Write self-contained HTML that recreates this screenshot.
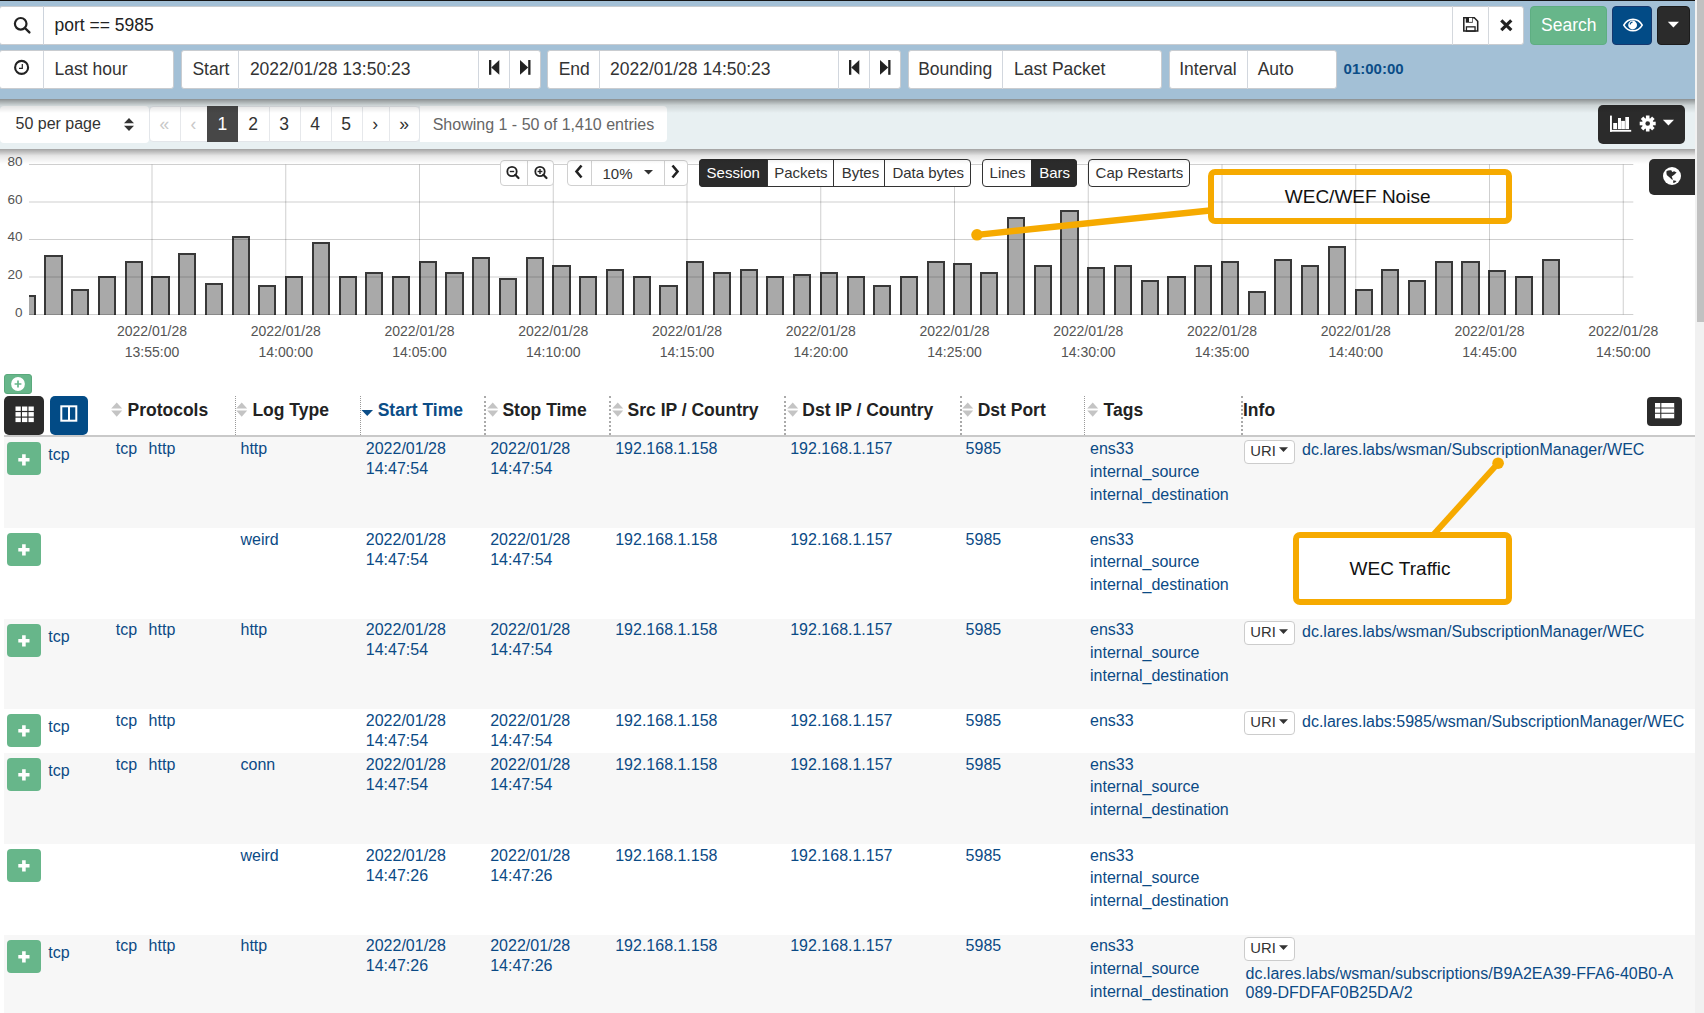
<!DOCTYPE html><html><head><meta charset="utf-8"><style>
html,body{margin:0;padding:0;width:1704px;height:1013px;overflow:hidden;background:#fff;}
body{position:relative;font-family:"Liberation Sans", sans-serif;}
.t{position:absolute;white-space:nowrap;line-height:1;}
.b{position:absolute;box-sizing:border-box;}
svg{position:absolute;overflow:visible;}
</style></head><body>
<div class="b" style="left:0.00px;top:0.00px;width:1695.00px;height:1.00px;background:#151515;"></div>
<div class="b" style="left:0.00px;top:1.00px;width:1695.00px;height:98.00px;background:#a3c0d6;"></div>
<div class="b" style="left:-0.60px;top:6.00px;width:1524.60px;height:38.50px;background:#fff;border:1px solid #c9ccd0;border-radius:3px;"></div>
<div class="b" style="left:43.00px;top:6.00px;width:1.00px;height:38.50px;background:#ccd3dc;"></div>
<div class="b" style="left:1452.00px;top:6.00px;width:1.00px;height:38.50px;background:#d4d8dd;"></div>
<div class="b" style="left:1488.00px;top:6.00px;width:1.00px;height:38.50px;background:#d4d8dd;"></div>
<div class="t" style="left:54.50px;top:17.00px;font-size:17.5px;color:#222;font-weight:normal;">port == 5985</div>
<svg style="left:0;top:0" width="50" height="50"><circle cx="20.7" cy="23.8" r="5.8" fill="none" stroke="#222" stroke-width="2.2"/><line x1="24.9" y1="28" x2="29.4" y2="32.4" stroke="#222" stroke-width="2.4" stroke-linecap="round"/></svg>
<svg style="left:1463.3px;top:16.9px" width="18" height="18"><path d="M0.8 0.8H11.3L14.7 4.2V14H0.8Z" fill="none" stroke="#222" stroke-width="1.55"/><rect x="2.8" y="0.4" width="7" height="5.3" fill="#222"/><rect x="6" y="0.9" width="3.2" height="4" fill="#fff"/><rect x="3.45" y="9.85" width="8.6" height="4.3" fill="none" stroke="#222" stroke-width="1.3"/></svg>
<svg style="left:1500.3px;top:19px" width="14" height="14"><path d="M1.3 1.3L11.3 11.1M11.3 1.3L1.3 11.1" stroke="#222" stroke-width="3.2"/></svg>
<div class="b" style="left:1530.00px;top:6.00px;width:77.00px;height:39.00px;background:#67b68a;border:1px solid #5eae82;border-radius:4px;"></div>
<div class="t" style="left:1541.00px;top:17.00px;font-size:17.5px;color:#fff;font-weight:normal;">Search</div>
<div class="b" style="left:1612.00px;top:6.00px;width:40.00px;height:39.00px;background:#024b86;border:1px solid #17386e;border-radius:4px;"></div>
<svg style="left:1612;top:6" width="40" height="39"><path d="M11.8 19.1C14 15.2 17 13.4 21 13.4S28 15.2 30.2 19.1C28 23 25 24.8 21 24.8S14 23 11.8 19.1z" fill="none" stroke="#fff" stroke-width="1.6"/><circle cx="20.6" cy="19" r="4.4" fill="#fff"/><path d="M18.2 18.6a2.6 2.6 0 0 1 2.3-2.5" fill="none" stroke="#024b86" stroke-width="1.1"/></svg>
<div class="b" style="left:1657.00px;top:6.00px;width:33.00px;height:39.00px;background:#2b2b2b;border:1px solid #1c1c1c;border-radius:4px;"></div>
<svg style="left:1657;top:6" width="33" height="39"><path d="M10.8 15.8h11.2l-5.6 5.6z" fill="#fff"/></svg>
<div class="b" style="left:-0.60px;top:50.20px;width:174.60px;height:38.70px;background:#fff;border:1px solid #c9ccd0;border-radius:3px;"></div>
<div class="b" style="left:43.00px;top:50.50px;width:1.00px;height:38.10px;background:#d2d7de;"></div>
<div class="b" style="left:181.00px;top:50.20px;width:359.80px;height:38.70px;background:#fff;border:1px solid #c9ccd0;border-radius:3px;"></div>
<div class="b" style="left:238.00px;top:50.50px;width:1.00px;height:38.10px;background:#d2d7de;"></div>
<div class="b" style="left:478.00px;top:50.50px;width:1.00px;height:38.10px;background:#d2d7de;"></div>
<div class="b" style="left:509.00px;top:50.50px;width:1.00px;height:38.10px;background:#d2d7de;"></div>
<div class="b" style="left:546.50px;top:50.20px;width:354.50px;height:38.70px;background:#fff;border:1px solid #c9ccd0;border-radius:3px;"></div>
<div class="b" style="left:599.00px;top:50.50px;width:1.00px;height:38.10px;background:#d2d7de;"></div>
<div class="b" style="left:838.00px;top:50.50px;width:1.00px;height:38.10px;background:#d2d7de;"></div>
<div class="b" style="left:869.00px;top:50.50px;width:1.00px;height:38.10px;background:#d2d7de;"></div>
<div class="b" style="left:908.00px;top:50.20px;width:253.50px;height:38.70px;background:#fff;border:1px solid #c9ccd0;border-radius:3px;"></div>
<div class="b" style="left:1002.00px;top:50.50px;width:1.00px;height:38.10px;background:#d2d7de;"></div>
<div class="b" style="left:1169.30px;top:50.20px;width:167.70px;height:38.70px;background:#fff;border:1px solid #c9ccd0;border-radius:3px;"></div>
<div class="b" style="left:1246.50px;top:50.50px;width:1.00px;height:38.10px;background:#d2d7de;"></div>
<svg style="left:0;top:50px" width="44" height="38"><circle cx="21.6" cy="17.4" r="6.5" fill="none" stroke="#222" stroke-width="2.1"/><path d="M22.3 14.1v4.3h-3.3" fill="none" stroke="#222" stroke-width="1.2"/></svg>
<div class="t" style="left:54.50px;top:61.00px;font-size:17.5px;color:#333;font-weight:normal;">Last hour</div>
<div class="t" style="left:192.40px;top:61.00px;font-size:17.5px;color:#333;font-weight:normal;">Start</div>
<div class="t" style="left:249.90px;top:61.00px;font-size:17.5px;color:#333;font-weight:normal;">2022/01/28 13:50:23</div>
<div class="t" style="left:558.70px;top:61.00px;font-size:17.5px;color:#333;font-weight:normal;">End</div>
<div class="t" style="left:610.00px;top:61.00px;font-size:17.5px;color:#333;font-weight:normal;">2022/01/28 14:50:23</div>
<div class="t" style="left:918.20px;top:61.00px;font-size:17.5px;color:#333;font-weight:normal;">Bounding</div>
<div class="t" style="left:1014.00px;top:61.00px;font-size:17.5px;color:#333;font-weight:normal;">Last Packet</div>
<div class="t" style="left:1179.20px;top:61.00px;font-size:17.5px;color:#333;font-weight:normal;">Interval</div>
<div class="t" style="left:1257.70px;top:61.00px;font-size:17.5px;color:#333;font-weight:normal;">Auto</div>
<div class="t" style="left:1343.60px;top:61.00px;font-size:15px;color:#0b4d87;font-weight:bold;">01:00:00</div>
<svg style="left:489px;top:60.1px" width="12" height="16"><rect x="0" y="0" width="2.3" height="14.8" fill="#222"/><path d="M10.3 0v14.8L2.3 7.4z" fill="#222"/></svg>
<svg style="left:520.2px;top:60.1px" width="12" height="16"><rect x="8.2" y="0" width="2.3" height="14.8" fill="#222"/><path d="M0 0v14.8l8.2-7.4z" fill="#222"/></svg>
<svg style="left:849px;top:60.1px" width="12" height="16"><rect x="0" y="0" width="2.3" height="14.8" fill="#222"/><path d="M10.3 0v14.8L2.3 7.4z" fill="#222"/></svg>
<svg style="left:880.2px;top:60.1px" width="12" height="16"><rect x="8.2" y="0" width="2.3" height="14.8" fill="#222"/><path d="M0 0v14.8l8.2-7.4z" fill="#222"/></svg>
<div class="b" style="left:0.00px;top:99.00px;width:1695.00px;height:49.60px;background:#e8f0f2;"></div>
<div class="b" style="left:0.00px;top:106.00px;width:148.50px;height:36.60px;background:#fff;border-radius:4px;"></div>
<div class="t" style="left:15.50px;top:116.00px;font-size:16px;color:#333;font-weight:normal;">50 per page</div>
<svg style="left:123px;top:117px" width="12" height="16"><path d="M1 6.3L6 1l5 5.3z M1 8.7L6 14l5-5.3z" fill="#333"/></svg>
<div class="b" style="left:149.00px;top:106.00px;width:270.70px;height:36.00px;background:#fff;border:1px solid #e3e6ea;border-radius:4px;"></div>
<div class="b" style="left:179.50px;top:106.00px;width:1.00px;height:36.00px;background:#e6e8eb;"></div>
<div class="t" style="left:149.0px;top:116px;width:30.5px;text-align:center;font-size:17.5px;color:#c8c8c8">«</div>
<div class="b" style="left:207.20px;top:106.00px;width:1.00px;height:36.00px;background:#e6e8eb;"></div>
<div class="t" style="left:179.5px;top:116px;width:27.7px;text-align:center;font-size:17.5px;color:#c8c8c8">‹</div>
<div class="b" style="left:207.20px;top:106.00px;width:30.50px;height:36.00px;background:#474747;"></div>
<div class="t" style="left:207.2px;top:116px;width:30.5px;text-align:center;font-size:17.5px;color:#fff">1</div>
<div class="b" style="left:268.70px;top:106.00px;width:1.00px;height:36.00px;background:#e6e8eb;"></div>
<div class="t" style="left:237.7px;top:116px;width:31.0px;text-align:center;font-size:17.5px;color:#333">2</div>
<div class="b" style="left:299.70px;top:106.00px;width:1.00px;height:36.00px;background:#e6e8eb;"></div>
<div class="t" style="left:268.7px;top:116px;width:31.0px;text-align:center;font-size:17.5px;color:#333">3</div>
<div class="b" style="left:330.70px;top:106.00px;width:1.00px;height:36.00px;background:#e6e8eb;"></div>
<div class="t" style="left:299.7px;top:116px;width:31.0px;text-align:center;font-size:17.5px;color:#333">4</div>
<div class="b" style="left:361.70px;top:106.00px;width:1.00px;height:36.00px;background:#e6e8eb;"></div>
<div class="t" style="left:330.7px;top:116px;width:31.0px;text-align:center;font-size:17.5px;color:#333">5</div>
<div class="b" style="left:388.50px;top:106.00px;width:1.00px;height:36.00px;background:#e6e8eb;"></div>
<div class="t" style="left:361.7px;top:116px;width:26.8px;text-align:center;font-size:17.5px;color:#333">›</div>
<div class="b" style="left:419.70px;top:106.00px;width:1.00px;height:36.00px;background:#e6e8eb;"></div>
<div class="t" style="left:388.5px;top:116px;width:31.2px;text-align:center;font-size:17.5px;color:#333">»</div>
<div class="b" style="left:420.40px;top:106.00px;width:246.60px;height:36.00px;background:#fff;border-radius:0 4px 4px 0;"></div>
<div class="t" style="left:432.70px;top:117.00px;font-size:16px;color:#666;font-weight:normal;">Showing 1 - 50 of 1,410 entries</div>
<div class="b" style="left:1598.00px;top:105.00px;width:87.00px;height:38.50px;background:#2b2b2b;border-radius:5px;"></div>
<svg style="left:1610px;top:115px" width="24" height="18"><rect x="0" y="0.6" width="1.9" height="16.1" fill="#fff"/><rect x="0" y="14.9" width="21.2" height="1.8" fill="#fff"/><rect x="3.2" y="8" width="3.9" height="6.1" fill="#fff"/><rect x="8" y="3" width="3" height="11.1" fill="#fff"/><rect x="11.2" y="5.9" width="3.7" height="8.2" fill="#fff"/><rect x="15.3" y="2" width="3.7" height="12.1" fill="#fff"/></svg>
<svg style="left:1638px;top:114px" width="20" height="20"><g transform="translate(9.7,9.5)"><circle r="5.6" fill="#fff"/><rect x="-1.8" y="-8" width="3.6" height="4" fill="#fff" transform="rotate(0)"/><rect x="-1.8" y="-8" width="3.6" height="4" fill="#fff" transform="rotate(45)"/><rect x="-1.8" y="-8" width="3.6" height="4" fill="#fff" transform="rotate(90)"/><rect x="-1.8" y="-8" width="3.6" height="4" fill="#fff" transform="rotate(135)"/><rect x="-1.8" y="-8" width="3.6" height="4" fill="#fff" transform="rotate(180)"/><rect x="-1.8" y="-8" width="3.6" height="4" fill="#fff" transform="rotate(225)"/><rect x="-1.8" y="-8" width="3.6" height="4" fill="#fff" transform="rotate(270)"/><rect x="-1.8" y="-8" width="3.6" height="4" fill="#fff" transform="rotate(315)"/><circle r="2.3" fill="#2b2b2b"/></g></svg>
<svg style="left:1662px;top:118px" width="14" height="10"><path d="M0.9 1.8h11.1l-5.55 5.6z" fill="#fff"/></svg>
<div class="b" style="left:0.00px;top:99.00px;width:1695.00px;height:14.00px;background:linear-gradient(rgba(0,0,0,.40),rgba(0,0,0,.12) 45%,rgba(0,0,0,0));"></div>
<div class="t" style="left:112.00px;top:324.00px;font-size:14px;color:#545454;font-weight:normal;width:80px;text-align:center;">2022/01/28</div>
<div class="t" style="left:112.00px;top:345.00px;font-size:14px;color:#545454;font-weight:normal;width:80px;text-align:center;">13:55:00</div>
<div class="t" style="left:245.75px;top:324.00px;font-size:14px;color:#545454;font-weight:normal;width:80px;text-align:center;">2022/01/28</div>
<div class="t" style="left:245.75px;top:345.00px;font-size:14px;color:#545454;font-weight:normal;width:80px;text-align:center;">14:00:00</div>
<div class="t" style="left:379.50px;top:324.00px;font-size:14px;color:#545454;font-weight:normal;width:80px;text-align:center;">2022/01/28</div>
<div class="t" style="left:379.50px;top:345.00px;font-size:14px;color:#545454;font-weight:normal;width:80px;text-align:center;">14:05:00</div>
<div class="t" style="left:513.25px;top:324.00px;font-size:14px;color:#545454;font-weight:normal;width:80px;text-align:center;">2022/01/28</div>
<div class="t" style="left:513.25px;top:345.00px;font-size:14px;color:#545454;font-weight:normal;width:80px;text-align:center;">14:10:00</div>
<div class="t" style="left:647.00px;top:324.00px;font-size:14px;color:#545454;font-weight:normal;width:80px;text-align:center;">2022/01/28</div>
<div class="t" style="left:647.00px;top:345.00px;font-size:14px;color:#545454;font-weight:normal;width:80px;text-align:center;">14:15:00</div>
<div class="t" style="left:780.75px;top:324.00px;font-size:14px;color:#545454;font-weight:normal;width:80px;text-align:center;">2022/01/28</div>
<div class="t" style="left:780.75px;top:345.00px;font-size:14px;color:#545454;font-weight:normal;width:80px;text-align:center;">14:20:00</div>
<div class="t" style="left:914.50px;top:324.00px;font-size:14px;color:#545454;font-weight:normal;width:80px;text-align:center;">2022/01/28</div>
<div class="t" style="left:914.50px;top:345.00px;font-size:14px;color:#545454;font-weight:normal;width:80px;text-align:center;">14:25:00</div>
<div class="t" style="left:1048.25px;top:324.00px;font-size:14px;color:#545454;font-weight:normal;width:80px;text-align:center;">2022/01/28</div>
<div class="t" style="left:1048.25px;top:345.00px;font-size:14px;color:#545454;font-weight:normal;width:80px;text-align:center;">14:30:00</div>
<div class="t" style="left:1182.00px;top:324.00px;font-size:14px;color:#545454;font-weight:normal;width:80px;text-align:center;">2022/01/28</div>
<div class="t" style="left:1182.00px;top:345.00px;font-size:14px;color:#545454;font-weight:normal;width:80px;text-align:center;">14:35:00</div>
<div class="t" style="left:1315.75px;top:324.00px;font-size:14px;color:#545454;font-weight:normal;width:80px;text-align:center;">2022/01/28</div>
<div class="t" style="left:1315.75px;top:345.00px;font-size:14px;color:#545454;font-weight:normal;width:80px;text-align:center;">14:40:00</div>
<div class="t" style="left:1449.50px;top:324.00px;font-size:14px;color:#545454;font-weight:normal;width:80px;text-align:center;">2022/01/28</div>
<div class="t" style="left:1449.50px;top:345.00px;font-size:14px;color:#545454;font-weight:normal;width:80px;text-align:center;">14:45:00</div>
<div class="t" style="left:1583.25px;top:324.00px;font-size:14px;color:#545454;font-weight:normal;width:80px;text-align:center;">2022/01/28</div>
<div class="t" style="left:1583.25px;top:345.00px;font-size:14px;color:#545454;font-weight:normal;width:80px;text-align:center;">14:50:00</div>
<div class="t" style="left:0.00px;top:155.00px;font-size:13.5px;color:#545454;font-weight:normal;width:22.5px;text-align:right;">80</div>
<div class="t" style="left:0.00px;top:193.00px;font-size:13.5px;color:#545454;font-weight:normal;width:22.5px;text-align:right;">60</div>
<div class="t" style="left:0.00px;top:230.00px;font-size:13.5px;color:#545454;font-weight:normal;width:22.5px;text-align:right;">40</div>
<div class="t" style="left:0.00px;top:268.00px;font-size:13.5px;color:#545454;font-weight:normal;width:22.5px;text-align:right;">20</div>
<div class="t" style="left:0.00px;top:306.00px;font-size:13.5px;color:#545454;font-weight:normal;width:22.5px;text-align:right;">0</div>
<div class="b" style="left:29.00px;top:295.10px;width:6.86px;height:19.90px;background:#a9a9a9;border-top:2.6px solid #383838;border-right:2.6px solid #383838;"></div>
<div class="b" style="left:44.40px;top:255.20px;width:18.20px;height:59.80px;background:#a9a9a9;border-top:2.6px solid #383838;border-right:2.6px solid #383838;border-left:2.6px solid #383838;"></div>
<div class="b" style="left:71.14px;top:288.70px;width:18.20px;height:26.30px;background:#a9a9a9;border-top:2.6px solid #383838;border-right:2.6px solid #383838;border-left:2.6px solid #383838;"></div>
<div class="b" style="left:97.87px;top:275.60px;width:18.20px;height:39.40px;background:#a9a9a9;border-top:2.6px solid #383838;border-right:2.6px solid #383838;border-left:2.6px solid #383838;"></div>
<div class="b" style="left:124.61px;top:261.00px;width:18.20px;height:54.00px;background:#a9a9a9;border-top:2.6px solid #383838;border-right:2.6px solid #383838;border-left:2.6px solid #383838;"></div>
<div class="b" style="left:151.35px;top:275.60px;width:18.20px;height:39.40px;background:#a9a9a9;border-top:2.6px solid #383838;border-right:2.6px solid #383838;border-left:2.6px solid #383838;"></div>
<div class="b" style="left:178.09px;top:253.30px;width:18.20px;height:61.70px;background:#a9a9a9;border-top:2.6px solid #383838;border-right:2.6px solid #383838;border-left:2.6px solid #383838;"></div>
<div class="b" style="left:204.82px;top:283.30px;width:18.20px;height:31.70px;background:#a9a9a9;border-top:2.6px solid #383838;border-right:2.6px solid #383838;border-left:2.6px solid #383838;"></div>
<div class="b" style="left:231.56px;top:236.40px;width:18.20px;height:78.60px;background:#a9a9a9;border-top:2.6px solid #383838;border-right:2.6px solid #383838;border-left:2.6px solid #383838;"></div>
<div class="b" style="left:258.30px;top:285.00px;width:18.20px;height:30.00px;background:#a9a9a9;border-top:2.6px solid #383838;border-right:2.6px solid #383838;border-left:2.6px solid #383838;"></div>
<div class="b" style="left:285.03px;top:275.60px;width:18.20px;height:39.40px;background:#a9a9a9;border-top:2.6px solid #383838;border-right:2.6px solid #383838;border-left:2.6px solid #383838;"></div>
<div class="b" style="left:311.77px;top:241.80px;width:18.20px;height:73.20px;background:#a9a9a9;border-top:2.6px solid #383838;border-right:2.6px solid #383838;border-left:2.6px solid #383838;"></div>
<div class="b" style="left:338.51px;top:275.60px;width:18.20px;height:39.40px;background:#a9a9a9;border-top:2.6px solid #383838;border-right:2.6px solid #383838;border-left:2.6px solid #383838;"></div>
<div class="b" style="left:365.24px;top:272.00px;width:18.20px;height:43.00px;background:#a9a9a9;border-top:2.6px solid #383838;border-right:2.6px solid #383838;border-left:2.6px solid #383838;"></div>
<div class="b" style="left:391.98px;top:275.60px;width:18.20px;height:39.40px;background:#a9a9a9;border-top:2.6px solid #383838;border-right:2.6px solid #383838;border-left:2.6px solid #383838;"></div>
<div class="b" style="left:418.72px;top:261.00px;width:18.20px;height:54.00px;background:#a9a9a9;border-top:2.6px solid #383838;border-right:2.6px solid #383838;border-left:2.6px solid #383838;"></div>
<div class="b" style="left:445.45px;top:272.30px;width:18.20px;height:42.70px;background:#a9a9a9;border-top:2.6px solid #383838;border-right:2.6px solid #383838;border-left:2.6px solid #383838;"></div>
<div class="b" style="left:472.19px;top:257.00px;width:18.20px;height:58.00px;background:#a9a9a9;border-top:2.6px solid #383838;border-right:2.6px solid #383838;border-left:2.6px solid #383838;"></div>
<div class="b" style="left:498.93px;top:278.00px;width:18.20px;height:37.00px;background:#a9a9a9;border-top:2.6px solid #383838;border-right:2.6px solid #383838;border-left:2.6px solid #383838;"></div>
<div class="b" style="left:525.67px;top:257.00px;width:18.20px;height:58.00px;background:#a9a9a9;border-top:2.6px solid #383838;border-right:2.6px solid #383838;border-left:2.6px solid #383838;"></div>
<div class="b" style="left:552.40px;top:265.00px;width:18.20px;height:50.00px;background:#a9a9a9;border-top:2.6px solid #383838;border-right:2.6px solid #383838;border-left:2.6px solid #383838;"></div>
<div class="b" style="left:579.14px;top:275.60px;width:18.20px;height:39.40px;background:#a9a9a9;border-top:2.6px solid #383838;border-right:2.6px solid #383838;border-left:2.6px solid #383838;"></div>
<div class="b" style="left:605.88px;top:268.50px;width:18.20px;height:46.50px;background:#a9a9a9;border-top:2.6px solid #383838;border-right:2.6px solid #383838;border-left:2.6px solid #383838;"></div>
<div class="b" style="left:632.61px;top:275.60px;width:18.20px;height:39.40px;background:#a9a9a9;border-top:2.6px solid #383838;border-right:2.6px solid #383838;border-left:2.6px solid #383838;"></div>
<div class="b" style="left:659.35px;top:285.20px;width:18.20px;height:29.80px;background:#a9a9a9;border-top:2.6px solid #383838;border-right:2.6px solid #383838;border-left:2.6px solid #383838;"></div>
<div class="b" style="left:686.09px;top:261.00px;width:18.20px;height:54.00px;background:#a9a9a9;border-top:2.6px solid #383838;border-right:2.6px solid #383838;border-left:2.6px solid #383838;"></div>
<div class="b" style="left:712.82px;top:272.30px;width:18.20px;height:42.70px;background:#a9a9a9;border-top:2.6px solid #383838;border-right:2.6px solid #383838;border-left:2.6px solid #383838;"></div>
<div class="b" style="left:739.56px;top:268.50px;width:18.20px;height:46.50px;background:#a9a9a9;border-top:2.6px solid #383838;border-right:2.6px solid #383838;border-left:2.6px solid #383838;"></div>
<div class="b" style="left:766.30px;top:275.60px;width:18.20px;height:39.40px;background:#a9a9a9;border-top:2.6px solid #383838;border-right:2.6px solid #383838;border-left:2.6px solid #383838;"></div>
<div class="b" style="left:793.04px;top:274.00px;width:18.20px;height:41.00px;background:#a9a9a9;border-top:2.6px solid #383838;border-right:2.6px solid #383838;border-left:2.6px solid #383838;"></div>
<div class="b" style="left:819.77px;top:272.30px;width:18.20px;height:42.70px;background:#a9a9a9;border-top:2.6px solid #383838;border-right:2.6px solid #383838;border-left:2.6px solid #383838;"></div>
<div class="b" style="left:846.51px;top:275.60px;width:18.20px;height:39.40px;background:#a9a9a9;border-top:2.6px solid #383838;border-right:2.6px solid #383838;border-left:2.6px solid #383838;"></div>
<div class="b" style="left:873.25px;top:285.20px;width:18.20px;height:29.80px;background:#a9a9a9;border-top:2.6px solid #383838;border-right:2.6px solid #383838;border-left:2.6px solid #383838;"></div>
<div class="b" style="left:899.98px;top:275.60px;width:18.20px;height:39.40px;background:#a9a9a9;border-top:2.6px solid #383838;border-right:2.6px solid #383838;border-left:2.6px solid #383838;"></div>
<div class="b" style="left:926.72px;top:261.00px;width:18.20px;height:54.00px;background:#a9a9a9;border-top:2.6px solid #383838;border-right:2.6px solid #383838;border-left:2.6px solid #383838;"></div>
<div class="b" style="left:953.46px;top:262.70px;width:18.20px;height:52.30px;background:#a9a9a9;border-top:2.6px solid #383838;border-right:2.6px solid #383838;border-left:2.6px solid #383838;"></div>
<div class="b" style="left:980.19px;top:272.30px;width:18.20px;height:42.70px;background:#a9a9a9;border-top:2.6px solid #383838;border-right:2.6px solid #383838;border-left:2.6px solid #383838;"></div>
<div class="b" style="left:1006.93px;top:217.10px;width:18.20px;height:97.90px;background:#a9a9a9;border-top:2.6px solid #383838;border-right:2.6px solid #383838;border-left:2.6px solid #383838;"></div>
<div class="b" style="left:1033.67px;top:265.00px;width:18.20px;height:50.00px;background:#a9a9a9;border-top:2.6px solid #383838;border-right:2.6px solid #383838;border-left:2.6px solid #383838;"></div>
<div class="b" style="left:1060.41px;top:209.90px;width:18.20px;height:105.10px;background:#a9a9a9;border-top:2.6px solid #383838;border-right:2.6px solid #383838;border-left:2.6px solid #383838;"></div>
<div class="b" style="left:1087.14px;top:267.00px;width:18.20px;height:48.00px;background:#a9a9a9;border-top:2.6px solid #383838;border-right:2.6px solid #383838;border-left:2.6px solid #383838;"></div>
<div class="b" style="left:1113.88px;top:265.00px;width:18.20px;height:50.00px;background:#a9a9a9;border-top:2.6px solid #383838;border-right:2.6px solid #383838;border-left:2.6px solid #383838;"></div>
<div class="b" style="left:1140.62px;top:279.80px;width:18.20px;height:35.20px;background:#a9a9a9;border-top:2.6px solid #383838;border-right:2.6px solid #383838;border-left:2.6px solid #383838;"></div>
<div class="b" style="left:1167.35px;top:275.60px;width:18.20px;height:39.40px;background:#a9a9a9;border-top:2.6px solid #383838;border-right:2.6px solid #383838;border-left:2.6px solid #383838;"></div>
<div class="b" style="left:1194.09px;top:265.00px;width:18.20px;height:50.00px;background:#a9a9a9;border-top:2.6px solid #383838;border-right:2.6px solid #383838;border-left:2.6px solid #383838;"></div>
<div class="b" style="left:1220.83px;top:261.00px;width:18.20px;height:54.00px;background:#a9a9a9;border-top:2.6px solid #383838;border-right:2.6px solid #383838;border-left:2.6px solid #383838;"></div>
<div class="b" style="left:1247.57px;top:290.80px;width:18.20px;height:24.20px;background:#a9a9a9;border-top:2.6px solid #383838;border-right:2.6px solid #383838;border-left:2.6px solid #383838;"></div>
<div class="b" style="left:1274.30px;top:259.20px;width:18.20px;height:55.80px;background:#a9a9a9;border-top:2.6px solid #383838;border-right:2.6px solid #383838;border-left:2.6px solid #383838;"></div>
<div class="b" style="left:1301.04px;top:265.00px;width:18.20px;height:50.00px;background:#a9a9a9;border-top:2.6px solid #383838;border-right:2.6px solid #383838;border-left:2.6px solid #383838;"></div>
<div class="b" style="left:1327.78px;top:245.80px;width:18.20px;height:69.20px;background:#a9a9a9;border-top:2.6px solid #383838;border-right:2.6px solid #383838;border-left:2.6px solid #383838;"></div>
<div class="b" style="left:1354.51px;top:289.20px;width:18.20px;height:25.80px;background:#a9a9a9;border-top:2.6px solid #383838;border-right:2.6px solid #383838;border-left:2.6px solid #383838;"></div>
<div class="b" style="left:1381.25px;top:268.50px;width:18.20px;height:46.50px;background:#a9a9a9;border-top:2.6px solid #383838;border-right:2.6px solid #383838;border-left:2.6px solid #383838;"></div>
<div class="b" style="left:1407.99px;top:279.80px;width:18.20px;height:35.20px;background:#a9a9a9;border-top:2.6px solid #383838;border-right:2.6px solid #383838;border-left:2.6px solid #383838;"></div>
<div class="b" style="left:1434.72px;top:261.00px;width:18.20px;height:54.00px;background:#a9a9a9;border-top:2.6px solid #383838;border-right:2.6px solid #383838;border-left:2.6px solid #383838;"></div>
<div class="b" style="left:1461.46px;top:261.00px;width:18.20px;height:54.00px;background:#a9a9a9;border-top:2.6px solid #383838;border-right:2.6px solid #383838;border-left:2.6px solid #383838;"></div>
<div class="b" style="left:1488.20px;top:270.00px;width:18.20px;height:45.00px;background:#a9a9a9;border-top:2.6px solid #383838;border-right:2.6px solid #383838;border-left:2.6px solid #383838;"></div>
<div class="b" style="left:1514.93px;top:275.60px;width:18.20px;height:39.40px;background:#a9a9a9;border-top:2.6px solid #383838;border-right:2.6px solid #383838;border-left:2.6px solid #383838;"></div>
<div class="b" style="left:1541.67px;top:259.20px;width:18.20px;height:55.80px;background:#a9a9a9;border-top:2.6px solid #383838;border-right:2.6px solid #383838;border-left:2.6px solid #383838;"></div>
<svg style="left:0;top:0" width="1704" height="400"><line x1="29" y1="164.5" x2="1633.3" y2="164.5" stroke="rgba(0,0,0,.19)" stroke-width="1"/><line x1="29" y1="202.0" x2="1633.3" y2="202.0" stroke="rgba(0,0,0,.19)" stroke-width="1"/><line x1="29" y1="239.5" x2="1633.3" y2="239.5" stroke="rgba(0,0,0,.19)" stroke-width="1"/><line x1="29" y1="277.0" x2="1633.3" y2="277.0" stroke="rgba(0,0,0,.19)" stroke-width="1"/><line x1="29" y1="314.5" x2="1633.3" y2="314.5" stroke="rgba(0,0,0,.19)" stroke-width="1"/><line x1="152.0" y1="164.5" x2="152.0" y2="314.5" stroke="rgba(0,0,0,.19)" stroke-width="1"/><line x1="285.75" y1="164.5" x2="285.75" y2="314.5" stroke="rgba(0,0,0,.19)" stroke-width="1"/><line x1="419.5" y1="164.5" x2="419.5" y2="314.5" stroke="rgba(0,0,0,.19)" stroke-width="1"/><line x1="553.25" y1="164.5" x2="553.25" y2="314.5" stroke="rgba(0,0,0,.19)" stroke-width="1"/><line x1="687.0" y1="164.5" x2="687.0" y2="314.5" stroke="rgba(0,0,0,.19)" stroke-width="1"/><line x1="820.75" y1="164.5" x2="820.75" y2="314.5" stroke="rgba(0,0,0,.19)" stroke-width="1"/><line x1="954.5" y1="164.5" x2="954.5" y2="314.5" stroke="rgba(0,0,0,.19)" stroke-width="1"/><line x1="1088.25" y1="164.5" x2="1088.25" y2="314.5" stroke="rgba(0,0,0,.19)" stroke-width="1"/><line x1="1222.0" y1="164.5" x2="1222.0" y2="314.5" stroke="rgba(0,0,0,.19)" stroke-width="1"/><line x1="1355.75" y1="164.5" x2="1355.75" y2="314.5" stroke="rgba(0,0,0,.19)" stroke-width="1"/><line x1="1489.5" y1="164.5" x2="1489.5" y2="314.5" stroke="rgba(0,0,0,.19)" stroke-width="1"/><line x1="1623.25" y1="164.5" x2="1623.25" y2="314.5" stroke="rgba(0,0,0,.19)" stroke-width="1"/></svg>
<div class="b" style="left:499.50px;top:159.50px;width:54.90px;height:26.10px;background:#fff;border:1px solid #d0d0d0;border-radius:4px;"></div>
<div class="b" style="left:526.50px;top:159.50px;width:1.00px;height:26.10px;background:#d0d0d0;"></div>
<div class="b" style="left:566.50px;top:159.50px;width:121.00px;height:26.10px;background:#fff;border:1px solid #d0d0d0;border-radius:4px;"></div>
<div class="b" style="left:590.80px;top:159.50px;width:1.00px;height:26.10px;background:#d0d0d0;"></div>
<div class="b" style="left:663.70px;top:159.50px;width:1.00px;height:26.10px;background:#d0d0d0;"></div>
<svg style="left:503px;top:163px" width="20" height="20"><circle cx="9" cy="8.5" r="4.7" fill="none" stroke="#222" stroke-width="1.8"/><line x1="12.3" y1="11.8" x2="15.5" y2="15" stroke="#222" stroke-width="2.2" stroke-linecap="round"/><line x1="6.8" y1="8.5" x2="11.2" y2="8.5" stroke="#222" stroke-width="1.4"/></svg>
<svg style="left:531px;top:163px" width="20" height="20"><circle cx="9" cy="8.5" r="4.7" fill="none" stroke="#222" stroke-width="1.8"/><line x1="12.3" y1="11.8" x2="15.5" y2="15" stroke="#222" stroke-width="2.2" stroke-linecap="round"/><line x1="6.6" y1="8.5" x2="11.4" y2="8.5" stroke="#222" stroke-width="1.4"/><line x1="9" y1="6.1" x2="9" y2="10.9" stroke="#222" stroke-width="1.4"/></svg>
<svg style="left:572px;top:163px" width="14" height="18"><path d="M9.5 2.5L4.5 8.5l5 6" fill="none" stroke="#222" stroke-width="2.6"/></svg>
<svg style="left:668px;top:163px" width="14" height="18"><path d="M4.5 2.5l5 6-5 6" fill="none" stroke="#222" stroke-width="2.6"/></svg>
<div class="t" style="left:602.50px;top:166.00px;font-size:15px;color:#333;font-weight:normal;">10%</div>
<svg style="left:643px;top:169px" width="12" height="8"><path d="M1 1h9l-4.5 4.5z" fill="#333"/></svg>
<div class="b" style="left:699.20px;top:158.90px;width:271.40px;height:27.90px;background:#fff;border:1px solid #333;border-radius:4px;"></div>
<div class="b" style="left:766.80px;top:158.90px;width:1.00px;height:27.90px;background:#333;"></div>
<div class="b" style="left:833.30px;top:158.90px;width:1.00px;height:27.90px;background:#333;"></div>
<div class="b" style="left:884.40px;top:158.90px;width:1.00px;height:27.90px;background:#333;"></div>
<div class="b" style="left:699.20px;top:158.90px;width:68.10px;height:27.90px;background:#2b2b2b;border-radius:4px 0 0 4px;"></div>
<div class="t" style="left:706.60px;top:165.00px;font-size:15px;color:#fff;font-weight:normal;">Session</div>
<div class="t" style="left:774.20px;top:165.00px;font-size:15px;color:#333;font-weight:normal;">Packets</div>
<div class="t" style="left:841.70px;top:165.00px;font-size:15px;color:#333;font-weight:normal;">Bytes</div>
<div class="t" style="left:892.40px;top:165.00px;font-size:15px;color:#333;font-weight:normal;">Data bytes</div>
<div class="b" style="left:982.20px;top:158.90px;width:94.40px;height:27.90px;background:#fff;border:1px solid #333;border-radius:4px;"></div>
<div class="b" style="left:1031.20px;top:158.90px;width:1.00px;height:27.90px;background:#333;"></div>
<div class="b" style="left:1031.20px;top:158.90px;width:45.40px;height:27.90px;background:#2b2b2b;border-radius:0 4px 4px 0;"></div>
<div class="t" style="left:989.60px;top:165.00px;font-size:15px;color:#333;font-weight:normal;">Lines</div>
<div class="t" style="left:1039.20px;top:165.00px;font-size:15px;color:#fff;font-weight:normal;">Bars</div>
<div class="b" style="left:1088.30px;top:158.90px;width:101.40px;height:27.90px;background:#fff;border:1px solid #333;border-radius:4px;"></div>
<div class="t" style="left:1095.60px;top:165.00px;font-size:15px;color:#333;font-weight:normal;">Cap Restarts</div>
<div class="b" style="left:0.00px;top:148.60px;width:1695.00px;height:15.40px;background:linear-gradient(rgba(0,0,0,.36),rgba(0,0,0,.1) 45%,rgba(0,0,0,0));"></div>
<div class="b" style="left:1649.20px;top:159.00px;width:45.80px;height:35.70px;background:#2b2b2b;border-radius:5px 0 0 5px;"></div>
<svg style="left:1663.1px;top:166.8px" width="18" height="18"><circle cx="9" cy="9" r="9" fill="#fff"/><path d="M3.6 3.9C5 3.2 7 3.1 8.3 3.3L9.2 5L11.1 4.3L13.6 5.6L11.2 7.7L8.7 9.6L9.9 12.6L9.1 12.8L6.4 10.3L4 8.2C3.4 6.8 3.3 5.2 3.6 3.9Z M10.2 13.3L13.5 13.9L12.1 15.4L10.2 16.1Z" fill="#2b2b2b"/></svg>
<div class="b" style="left:4.00px;top:374.00px;width:27.80px;height:19.70px;background:#67b68a;border:1px solid #5aa97c;border-radius:3px;"></div>
<svg style="left:11px;top:376.6px" width="14" height="14"><circle cx="7" cy="7" r="6.9" fill="#fff"/><path d="M7 3.6v6.8M3.6 7h6.8" stroke="#67b68a" stroke-width="1.7"/></svg>
<div class="b" style="left:4.00px;top:396.00px;width:40.00px;height:38.80px;background:#2b2b2b;border-radius:5px;"></div>
<svg style="left:15px;top:406px" width="20" height="18"><rect x="0.5" y="0.5" width="5.3" height="4.4" fill="#fff"/><rect x="7.0" y="0.5" width="5.3" height="4.4" fill="#fff"/><rect x="13.5" y="0.5" width="5.3" height="4.4" fill="#fff"/><rect x="0.5" y="6.1" width="5.3" height="4.4" fill="#fff"/><rect x="7.0" y="6.1" width="5.3" height="4.4" fill="#fff"/><rect x="13.5" y="6.1" width="5.3" height="4.4" fill="#fff"/><rect x="0.5" y="11.7" width="5.3" height="4.4" fill="#fff"/><rect x="7.0" y="11.7" width="5.3" height="4.4" fill="#fff"/><rect x="13.5" y="11.7" width="5.3" height="4.4" fill="#fff"/></svg>
<div class="b" style="left:50.00px;top:396.00px;width:38.00px;height:38.80px;background:#024b86;border-radius:5px;"></div>
<svg style="left:60px;top:405px" width="18" height="18"><rect x="1.3" y="1.3" width="15" height="14.4" fill="none" stroke="#fff" stroke-width="2"/><rect x="8" y="1" width="2" height="15" fill="#fff"/></svg>
<div class="b" style="left:235.00px;top:396.00px;width:1.00px;height:39.00px;border-left:1px dotted #999;"></div>
<div class="b" style="left:360.00px;top:396.00px;width:1.00px;height:39.00px;border-left:1px dotted #999;"></div>
<div class="b" style="left:1084.00px;top:396.00px;width:1.00px;height:39.00px;border-left:1px dotted #999;"></div>
<div class="b" style="left:484.00px;top:396.00px;width:2.00px;height:39.00px;border-left:2px dotted #aaa;"></div>
<div class="b" style="left:609.00px;top:396.00px;width:2.00px;height:39.00px;border-left:2px dotted #aaa;"></div>
<div class="b" style="left:784.00px;top:396.00px;width:2.00px;height:39.00px;border-left:2px dotted #aaa;"></div>
<div class="b" style="left:959.50px;top:396.00px;width:2.00px;height:39.00px;border-left:2px dotted #aaa;"></div>
<div class="b" style="left:1240.50px;top:396.00px;width:2.00px;height:39.00px;border-left:2px dotted #aaa;"></div>
<div class="b" style="left:4.00px;top:435.00px;width:1691.00px;height:2.00px;background:#c9c9c9;"></div>
<svg style="left:111px;top:402px" width="12" height="16"><path d="M0.2 6.5L5.7 0.4 11.2 6.5z M0.2 8.6L5.7 14.8 11.2 8.6z" fill="#c4c4c4"/></svg>
<div class="t" style="left:127.50px;top:402.00px;font-size:17.5px;color:#222;font-weight:bold;">Protocols</div>
<svg style="left:236.4px;top:402px" width="12" height="16"><path d="M0.2 6.5L5.7 0.4 11.2 6.5z M0.2 8.6L5.7 14.8 11.2 8.6z" fill="#c4c4c4"/></svg>
<div class="t" style="left:252.40px;top:402.00px;font-size:17.5px;color:#222;font-weight:bold;">Log Type</div>
<div class="t" style="left:377.70px;top:402.00px;font-size:17.5px;color:#0b4d87;font-weight:bold;">Start Time</div>
<svg style="left:487px;top:402px" width="12" height="16"><path d="M0.2 6.5L5.7 0.4 11.2 6.5z M0.2 8.6L5.7 14.8 11.2 8.6z" fill="#c4c4c4"/></svg>
<div class="t" style="left:502.40px;top:402.00px;font-size:17.5px;color:#222;font-weight:bold;">Stop Time</div>
<svg style="left:612px;top:402px" width="12" height="16"><path d="M0.2 6.5L5.7 0.4 11.2 6.5z M0.2 8.6L5.7 14.8 11.2 8.6z" fill="#c4c4c4"/></svg>
<div class="t" style="left:627.60px;top:402.00px;font-size:17.5px;color:#222;font-weight:bold;">Src IP / Country</div>
<svg style="left:786.5px;top:402px" width="12" height="16"><path d="M0.2 6.5L5.7 0.4 11.2 6.5z M0.2 8.6L5.7 14.8 11.2 8.6z" fill="#c4c4c4"/></svg>
<div class="t" style="left:802.30px;top:402.00px;font-size:17.5px;color:#222;font-weight:bold;">Dst IP / Country</div>
<svg style="left:961.5px;top:402px" width="12" height="16"><path d="M0.2 6.5L5.7 0.4 11.2 6.5z M0.2 8.6L5.7 14.8 11.2 8.6z" fill="#c4c4c4"/></svg>
<div class="t" style="left:977.70px;top:402.00px;font-size:17.5px;color:#222;font-weight:bold;">Dst Port</div>
<svg style="left:1086.5px;top:402px" width="12" height="16"><path d="M0.2 6.5L5.7 0.4 11.2 6.5z M0.2 8.6L5.7 14.8 11.2 8.6z" fill="#c4c4c4"/></svg>
<div class="t" style="left:1103.60px;top:402.00px;font-size:17.5px;color:#222;font-weight:bold;">Tags</div>
<div class="t" style="left:1243.00px;top:402.00px;font-size:17.5px;color:#222;font-weight:bold;">Info</div>
<svg style="left:361px;top:409px" width="13" height="8"><path d="M0.5 1h11.5l-5.75 6z" fill="#0b4d87"/></svg>
<div class="b" style="left:1647.00px;top:396.80px;width:35.30px;height:28.80px;background:#2b2b2b;border-radius:4px;"></div>
<svg style="left:1655px;top:402.9px" width="20" height="16"><rect x="0" y="0" width="19.2" height="15.3" fill="#fff"/><path d="M0 5.05h19.2M0 10.15h19.2M5.8 0v15.3" stroke="#2b2b2b" stroke-width="1.05"/></svg>
<div class="b" style="left:4.00px;top:437.00px;width:1691.00px;height:90.80px;background:#f7f7f7;"></div>
<div class="b" style="left:7.00px;top:442.20px;width:33.80px;height:33.30px;background:#67b68a;border-radius:4px;"></div>
<svg style="left:17px;top:452.5px" width="14" height="14"><path d="M6.9 1.2v11.2M1.3 6.8h11.2" stroke="#fff" stroke-width="3.6"/></svg>
<div class="t" style="left:48.30px;top:447.00px;font-size:16px;color:#0b4a85;font-weight:normal;">tcp</div>
<div class="t" style="left:115.80px;top:441.00px;font-size:16px;color:#0b4a85;font-weight:normal;">tcp</div>
<div class="t" style="left:148.60px;top:441.00px;font-size:16px;color:#0b4a85;font-weight:normal;">http</div>
<div class="t" style="left:240.50px;top:441.00px;font-size:16px;color:#0b4a85;font-weight:normal;">http</div>
<div class="t" style="left:365.80px;top:441.00px;font-size:16px;color:#0b4a85;font-weight:normal;">2022/01/28</div>
<div class="t" style="left:365.80px;top:461.00px;font-size:16px;color:#0b4a85;font-weight:normal;">14:47:54</div>
<div class="t" style="left:490.20px;top:441.00px;font-size:16px;color:#0b4a85;font-weight:normal;">2022/01/28</div>
<div class="t" style="left:490.20px;top:461.00px;font-size:16px;color:#0b4a85;font-weight:normal;">14:47:54</div>
<div class="t" style="left:615.20px;top:441.00px;font-size:16px;color:#0b4a85;font-weight:normal;">192.168.1.158</div>
<div class="t" style="left:790.20px;top:441.00px;font-size:16px;color:#0b4a85;font-weight:normal;">192.168.1.157</div>
<div class="t" style="left:965.60px;top:441.00px;font-size:16px;color:#0b4a85;font-weight:normal;">5985</div>
<div class="t" style="left:1090.00px;top:441.00px;font-size:16px;color:#0b4a85;font-weight:normal;">ens33</div>
<div class="t" style="left:1090.00px;top:464.00px;font-size:16px;color:#0b4a85;font-weight:normal;">internal_source</div>
<div class="t" style="left:1090.00px;top:487.00px;font-size:16px;color:#0b4a85;font-weight:normal;">internal_destination</div>
<div class="b" style="left:1244.40px;top:439.60px;width:50.20px;height:24.20px;background:#fff;border:1px solid #ccc;border-radius:4px;"></div>
<div class="t" style="left:1250.30px;top:444.00px;font-size:14.8px;color:#333;font-weight:normal;">URI</div>
<svg style="left:1279px;top:447.0px" width="10" height="6"><path d="M0 0.2h9l-4.5 4.8z" fill="#333"/></svg>
<div class="t" style="left:1302.00px;top:442.00px;font-size:16px;color:#0b4a85;font-weight:normal;">dc.lares.labs/wsman/SubscriptionManager/WEC</div>
<div class="b" style="left:4.00px;top:527.80px;width:1691.00px;height:90.80px;background:#fff;"></div>
<div class="b" style="left:7.00px;top:533.00px;width:33.80px;height:33.30px;background:#67b68a;border-radius:4px;"></div>
<svg style="left:17px;top:543.3px" width="14" height="14"><path d="M6.9 1.2v11.2M1.3 6.8h11.2" stroke="#fff" stroke-width="3.6"/></svg>
<div class="t" style="left:240.50px;top:532.00px;font-size:16px;color:#0b4a85;font-weight:normal;">weird</div>
<div class="t" style="left:365.80px;top:532.00px;font-size:16px;color:#0b4a85;font-weight:normal;">2022/01/28</div>
<div class="t" style="left:365.80px;top:552.00px;font-size:16px;color:#0b4a85;font-weight:normal;">14:47:54</div>
<div class="t" style="left:490.20px;top:532.00px;font-size:16px;color:#0b4a85;font-weight:normal;">2022/01/28</div>
<div class="t" style="left:490.20px;top:552.00px;font-size:16px;color:#0b4a85;font-weight:normal;">14:47:54</div>
<div class="t" style="left:615.20px;top:532.00px;font-size:16px;color:#0b4a85;font-weight:normal;">192.168.1.158</div>
<div class="t" style="left:790.20px;top:532.00px;font-size:16px;color:#0b4a85;font-weight:normal;">192.168.1.157</div>
<div class="t" style="left:965.60px;top:532.00px;font-size:16px;color:#0b4a85;font-weight:normal;">5985</div>
<div class="t" style="left:1090.00px;top:532.00px;font-size:16px;color:#0b4a85;font-weight:normal;">ens33</div>
<div class="t" style="left:1090.00px;top:554.00px;font-size:16px;color:#0b4a85;font-weight:normal;">internal_source</div>
<div class="t" style="left:1090.00px;top:577.00px;font-size:16px;color:#0b4a85;font-weight:normal;">internal_destination</div>
<div class="b" style="left:4.00px;top:618.60px;width:1691.00px;height:90.10px;background:#f7f7f7;"></div>
<div class="b" style="left:7.00px;top:623.80px;width:33.80px;height:33.30px;background:#67b68a;border-radius:4px;"></div>
<svg style="left:17px;top:634.1px" width="14" height="14"><path d="M6.9 1.2v11.2M1.3 6.8h11.2" stroke="#fff" stroke-width="3.6"/></svg>
<div class="t" style="left:48.30px;top:629.00px;font-size:16px;color:#0b4a85;font-weight:normal;">tcp</div>
<div class="t" style="left:115.80px;top:622.00px;font-size:16px;color:#0b4a85;font-weight:normal;">tcp</div>
<div class="t" style="left:148.60px;top:622.00px;font-size:16px;color:#0b4a85;font-weight:normal;">http</div>
<div class="t" style="left:240.50px;top:622.00px;font-size:16px;color:#0b4a85;font-weight:normal;">http</div>
<div class="t" style="left:365.80px;top:622.00px;font-size:16px;color:#0b4a85;font-weight:normal;">2022/01/28</div>
<div class="t" style="left:365.80px;top:642.00px;font-size:16px;color:#0b4a85;font-weight:normal;">14:47:54</div>
<div class="t" style="left:490.20px;top:622.00px;font-size:16px;color:#0b4a85;font-weight:normal;">2022/01/28</div>
<div class="t" style="left:490.20px;top:642.00px;font-size:16px;color:#0b4a85;font-weight:normal;">14:47:54</div>
<div class="t" style="left:615.20px;top:622.00px;font-size:16px;color:#0b4a85;font-weight:normal;">192.168.1.158</div>
<div class="t" style="left:790.20px;top:622.00px;font-size:16px;color:#0b4a85;font-weight:normal;">192.168.1.157</div>
<div class="t" style="left:965.60px;top:622.00px;font-size:16px;color:#0b4a85;font-weight:normal;">5985</div>
<div class="t" style="left:1090.00px;top:622.00px;font-size:16px;color:#0b4a85;font-weight:normal;">ens33</div>
<div class="t" style="left:1090.00px;top:645.00px;font-size:16px;color:#0b4a85;font-weight:normal;">internal_source</div>
<div class="t" style="left:1090.00px;top:668.00px;font-size:16px;color:#0b4a85;font-weight:normal;">internal_destination</div>
<div class="b" style="left:1244.40px;top:621.20px;width:50.20px;height:24.20px;background:#fff;border:1px solid #ccc;border-radius:4px;"></div>
<div class="t" style="left:1250.30px;top:625.00px;font-size:14.8px;color:#333;font-weight:normal;">URI</div>
<svg style="left:1279px;top:628.6px" width="10" height="6"><path d="M0 0.2h9l-4.5 4.8z" fill="#333"/></svg>
<div class="t" style="left:1302.00px;top:624.00px;font-size:16px;color:#0b4a85;font-weight:normal;">dc.lares.labs/wsman/SubscriptionManager/WEC</div>
<div class="b" style="left:4.00px;top:708.70px;width:1691.00px;height:44.00px;background:#fff;"></div>
<div class="b" style="left:7.00px;top:713.90px;width:33.80px;height:33.30px;background:#67b68a;border-radius:4px;"></div>
<svg style="left:17px;top:724.2px" width="14" height="14"><path d="M6.9 1.2v11.2M1.3 6.8h11.2" stroke="#fff" stroke-width="3.6"/></svg>
<div class="t" style="left:48.30px;top:719.00px;font-size:16px;color:#0b4a85;font-weight:normal;">tcp</div>
<div class="t" style="left:115.80px;top:713.00px;font-size:16px;color:#0b4a85;font-weight:normal;">tcp</div>
<div class="t" style="left:148.60px;top:713.00px;font-size:16px;color:#0b4a85;font-weight:normal;">http</div>
<div class="t" style="left:365.80px;top:713.00px;font-size:16px;color:#0b4a85;font-weight:normal;">2022/01/28</div>
<div class="t" style="left:365.80px;top:733.00px;font-size:16px;color:#0b4a85;font-weight:normal;">14:47:54</div>
<div class="t" style="left:490.20px;top:713.00px;font-size:16px;color:#0b4a85;font-weight:normal;">2022/01/28</div>
<div class="t" style="left:490.20px;top:733.00px;font-size:16px;color:#0b4a85;font-weight:normal;">14:47:54</div>
<div class="t" style="left:615.20px;top:713.00px;font-size:16px;color:#0b4a85;font-weight:normal;">192.168.1.158</div>
<div class="t" style="left:790.20px;top:713.00px;font-size:16px;color:#0b4a85;font-weight:normal;">192.168.1.157</div>
<div class="t" style="left:965.60px;top:713.00px;font-size:16px;color:#0b4a85;font-weight:normal;">5985</div>
<div class="t" style="left:1090.00px;top:713.00px;font-size:16px;color:#0b4a85;font-weight:normal;">ens33</div>
<div class="b" style="left:1244.40px;top:711.30px;width:50.20px;height:24.20px;background:#fff;border:1px solid #ccc;border-radius:4px;"></div>
<div class="t" style="left:1250.30px;top:715.00px;font-size:14.8px;color:#333;font-weight:normal;">URI</div>
<svg style="left:1279px;top:718.7px" width="10" height="6"><path d="M0 0.2h9l-4.5 4.8z" fill="#333"/></svg>
<div class="t" style="left:1302.00px;top:714.00px;font-size:16px;color:#0b4a85;font-weight:normal;">dc.lares.labs:5985/wsman/SubscriptionManager/WEC</div>
<div class="b" style="left:4.00px;top:752.70px;width:1691.00px;height:91.10px;background:#f7f7f7;"></div>
<div class="b" style="left:7.00px;top:757.90px;width:33.80px;height:33.30px;background:#67b68a;border-radius:4px;"></div>
<svg style="left:17px;top:768.2px" width="14" height="14"><path d="M6.9 1.2v11.2M1.3 6.8h11.2" stroke="#fff" stroke-width="3.6"/></svg>
<div class="t" style="left:48.30px;top:763.00px;font-size:16px;color:#0b4a85;font-weight:normal;">tcp</div>
<div class="t" style="left:115.80px;top:757.00px;font-size:16px;color:#0b4a85;font-weight:normal;">tcp</div>
<div class="t" style="left:148.60px;top:757.00px;font-size:16px;color:#0b4a85;font-weight:normal;">http</div>
<div class="t" style="left:240.50px;top:757.00px;font-size:16px;color:#0b4a85;font-weight:normal;">conn</div>
<div class="t" style="left:365.80px;top:757.00px;font-size:16px;color:#0b4a85;font-weight:normal;">2022/01/28</div>
<div class="t" style="left:365.80px;top:777.00px;font-size:16px;color:#0b4a85;font-weight:normal;">14:47:54</div>
<div class="t" style="left:490.20px;top:757.00px;font-size:16px;color:#0b4a85;font-weight:normal;">2022/01/28</div>
<div class="t" style="left:490.20px;top:777.00px;font-size:16px;color:#0b4a85;font-weight:normal;">14:47:54</div>
<div class="t" style="left:615.20px;top:757.00px;font-size:16px;color:#0b4a85;font-weight:normal;">192.168.1.158</div>
<div class="t" style="left:790.20px;top:757.00px;font-size:16px;color:#0b4a85;font-weight:normal;">192.168.1.157</div>
<div class="t" style="left:965.60px;top:757.00px;font-size:16px;color:#0b4a85;font-weight:normal;">5985</div>
<div class="t" style="left:1090.00px;top:757.00px;font-size:16px;color:#0b4a85;font-weight:normal;">ens33</div>
<div class="t" style="left:1090.00px;top:779.00px;font-size:16px;color:#0b4a85;font-weight:normal;">internal_source</div>
<div class="t" style="left:1090.00px;top:802.00px;font-size:16px;color:#0b4a85;font-weight:normal;">internal_destination</div>
<div class="b" style="left:4.00px;top:843.80px;width:1691.00px;height:90.80px;background:#fff;"></div>
<div class="b" style="left:7.00px;top:849.00px;width:33.80px;height:33.30px;background:#67b68a;border-radius:4px;"></div>
<svg style="left:17px;top:859.3px" width="14" height="14"><path d="M6.9 1.2v11.2M1.3 6.8h11.2" stroke="#fff" stroke-width="3.6"/></svg>
<div class="t" style="left:240.50px;top:848.00px;font-size:16px;color:#0b4a85;font-weight:normal;">weird</div>
<div class="t" style="left:365.80px;top:848.00px;font-size:16px;color:#0b4a85;font-weight:normal;">2022/01/28</div>
<div class="t" style="left:365.80px;top:868.00px;font-size:16px;color:#0b4a85;font-weight:normal;">14:47:26</div>
<div class="t" style="left:490.20px;top:848.00px;font-size:16px;color:#0b4a85;font-weight:normal;">2022/01/28</div>
<div class="t" style="left:490.20px;top:868.00px;font-size:16px;color:#0b4a85;font-weight:normal;">14:47:26</div>
<div class="t" style="left:615.20px;top:848.00px;font-size:16px;color:#0b4a85;font-weight:normal;">192.168.1.158</div>
<div class="t" style="left:790.20px;top:848.00px;font-size:16px;color:#0b4a85;font-weight:normal;">192.168.1.157</div>
<div class="t" style="left:965.60px;top:848.00px;font-size:16px;color:#0b4a85;font-weight:normal;">5985</div>
<div class="t" style="left:1090.00px;top:848.00px;font-size:16px;color:#0b4a85;font-weight:normal;">ens33</div>
<div class="t" style="left:1090.00px;top:870.00px;font-size:16px;color:#0b4a85;font-weight:normal;">internal_source</div>
<div class="t" style="left:1090.00px;top:893.00px;font-size:16px;color:#0b4a85;font-weight:normal;">internal_destination</div>
<div class="b" style="left:4.00px;top:934.60px;width:1691.00px;height:90.00px;background:#f7f7f7;"></div>
<div class="b" style="left:7.00px;top:939.80px;width:33.80px;height:33.30px;background:#67b68a;border-radius:4px;"></div>
<svg style="left:17px;top:950.1px" width="14" height="14"><path d="M6.9 1.2v11.2M1.3 6.8h11.2" stroke="#fff" stroke-width="3.6"/></svg>
<div class="t" style="left:48.30px;top:945.00px;font-size:16px;color:#0b4a85;font-weight:normal;">tcp</div>
<div class="t" style="left:115.80px;top:938.00px;font-size:16px;color:#0b4a85;font-weight:normal;">tcp</div>
<div class="t" style="left:148.60px;top:938.00px;font-size:16px;color:#0b4a85;font-weight:normal;">http</div>
<div class="t" style="left:240.50px;top:938.00px;font-size:16px;color:#0b4a85;font-weight:normal;">http</div>
<div class="t" style="left:365.80px;top:938.00px;font-size:16px;color:#0b4a85;font-weight:normal;">2022/01/28</div>
<div class="t" style="left:365.80px;top:958.00px;font-size:16px;color:#0b4a85;font-weight:normal;">14:47:26</div>
<div class="t" style="left:490.20px;top:938.00px;font-size:16px;color:#0b4a85;font-weight:normal;">2022/01/28</div>
<div class="t" style="left:490.20px;top:958.00px;font-size:16px;color:#0b4a85;font-weight:normal;">14:47:26</div>
<div class="t" style="left:615.20px;top:938.00px;font-size:16px;color:#0b4a85;font-weight:normal;">192.168.1.158</div>
<div class="t" style="left:790.20px;top:938.00px;font-size:16px;color:#0b4a85;font-weight:normal;">192.168.1.157</div>
<div class="t" style="left:965.60px;top:938.00px;font-size:16px;color:#0b4a85;font-weight:normal;">5985</div>
<div class="t" style="left:1090.00px;top:938.00px;font-size:16px;color:#0b4a85;font-weight:normal;">ens33</div>
<div class="t" style="left:1090.00px;top:961.00px;font-size:16px;color:#0b4a85;font-weight:normal;">internal_source</div>
<div class="t" style="left:1090.00px;top:984.00px;font-size:16px;color:#0b4a85;font-weight:normal;">internal_destination</div>
<div class="b" style="left:1244.40px;top:937.20px;width:50.20px;height:24.20px;background:#fff;border:1px solid #ccc;border-radius:4px;"></div>
<div class="t" style="left:1250.30px;top:941.00px;font-size:14.8px;color:#333;font-weight:normal;">URI</div>
<svg style="left:1279px;top:944.6px" width="10" height="6"><path d="M0 0.2h9l-4.5 4.8z" fill="#333"/></svg>
<div class="t" style="left:1245.50px;top:966.00px;font-size:16px;color:#0b4a85;font-weight:normal;">dc.lares.labs/wsman/subscriptions/B9A2EA39-FFA6-40B0-A</div>
<div class="t" style="left:1245.50px;top:985.00px;font-size:16px;color:#0b4a85;font-weight:normal;">089-DFDFAF0B25DA/2</div>
<svg style="left:0;top:0" width="1704" height="1013"><line x1="977" y1="234.8" x2="1210" y2="210.5" stroke="#f6aa00" stroke-width="6.3"/><circle cx="977" cy="234.8" r="5.8" fill="#f6aa00"/><line x1="1498.1" y1="463.2" x2="1434" y2="534" stroke="#f6aa00" stroke-width="6"/><circle cx="1498.1" cy="463.2" r="5.8" fill="#f6aa00"/></svg>
<div class="b" style="left:1208.00px;top:169.00px;width:303.70px;height:54.50px;border:6.2px solid #f6aa00;border-radius:7px;"></div>
<div class="t" style="left:1284.80px;top:187.00px;font-size:19px;color:#111;font-weight:normal;">WEC/WEF Noise</div>
<div class="b" style="left:1293.10px;top:532.00px;width:218.80px;height:73.20px;border:6px solid #f6aa00;border-radius:7px;background:#fff;"></div>
<div class="t" style="left:1349.60px;top:559.00px;font-size:19px;color:#111;font-weight:normal;">WEC Traffic</div>
<div class="b" style="left:1695.00px;top:0.00px;width:9.00px;height:1013.00px;background:#f1f1f1;"></div>
<div class="b" style="left:1697.00px;top:0.00px;width:7.00px;height:321.70px;background:#c1c1c1;"></div>
</body></html>
